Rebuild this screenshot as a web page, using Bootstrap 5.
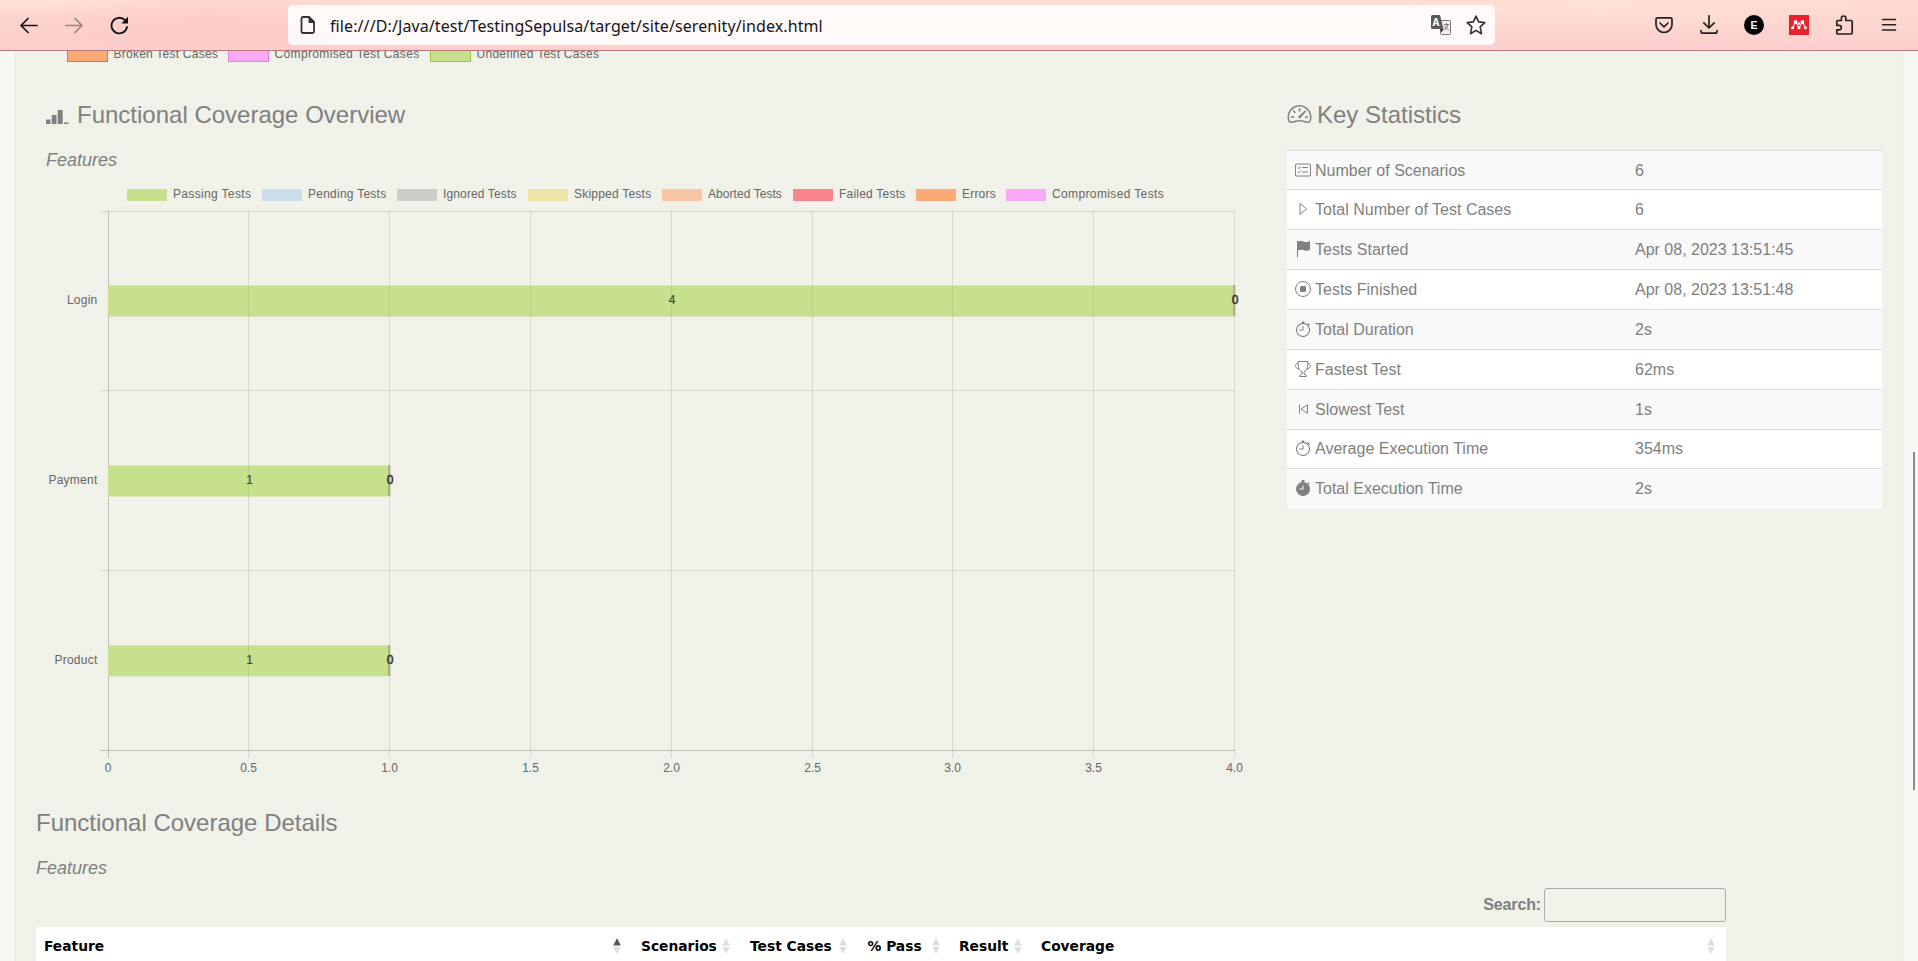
<!DOCTYPE html>
<html lang="en">
<head>
<meta charset="utf-8">
<title>Serenity Reports</title>
<link href="https://cdn.jsdelivr.net/npm/bootstrap@5.3.0/dist/css/bootstrap.min.css" rel="stylesheet">
<style>
html,body{height:961px;overflow:hidden}
body{font-family:"Liberation Sans",Arial,sans-serif;font-size:16px;color:#808080;background:#f7f8f3;width:1918px;line-height:1.42857}
.toolbar{height:51px;border-bottom:1px solid #b87a7a;padding-left:19px;background:radial-gradient(ellipse 260px 34px at 210px 28px,#fdcbc8 0,rgba(253,203,200,0) 100%),radial-gradient(ellipse 300px 26px at 1600px 8px,#ffe0d4 0,rgba(255,224,212,0) 100%),radial-gradient(ellipse 160px 22px at 60px 0,#ffe2d6 0,rgba(255,226,214,0) 100%),linear-gradient(180deg,#fedcd2 0,#fdd5cf 45%,#fccfce 100%)}
.toolbar svg{display:block;flex:none}
.gap-tools{gap:25px;margin-left:159px}
.url{margin-left:158px;width:1207px;height:40px;border-radius:5px;background:rgba(255,255,255,.86);color:#15141a;font-family:"Noto Sans",sans-serif;font-size:16px;padding:0 9px 0 12px}
.url .addr{margin:2px 0 0 14px;white-space:nowrap;letter-spacing:.1px}
.page-body{height:910px;margin-left:15px;width:1888px;border:solid #e5e6de;border-width:0 1px;background:#f0f1e8;position:relative;overflow:hidden}
.cut-legend{height:11px;padding-left:51px;font-size:12px;color:#666;line-height:12px}
.cut-legend .sw{width:41px;height:11px;border:1px solid;border-top:0;margin-right:5.500px}
.cut-legend .tx span{display:block;margin-top:-3px;white-space:nowrap}
h3{font-size:24px;font-weight:400;line-height:26px;margin:0;color:#808080;white-space:nowrap}
h4{font-size:18px;font-weight:400;font-style:italic;line-height:20px;margin:0;color:#808080}
.chart-legend{font-size:12px;color:#666;line-height:12px;height:12px;padding-left:111px}
.chart-legend .sw{width:40px;height:12px;margin-right:6px}
.chart-legend .tx{white-space:nowrap;margin-right:10px;margin-top:-1px}
.left-col{width:1271px}
.stats{width:595px;margin:0}
.stats td{height:40px;padding:0 8px;border-top:1px solid #ddd;border-bottom:0;color:#808080!important;vertical-align:middle;background:#fff;line-height:22px}
.stats tr:nth-child(odd) td{background:#f9f9f9}
.stats tr.sh td{height:39px}
.stats tr:first-child td{padding-top:1px}
.stats svg{width:16px;height:16px;fill:currentColor;margin-right:4px;vertical-align:-2px}
.search-row{width:1690px;margin-left:20px}
.search-row b{letter-spacing:-.15px;padding-top:1px}
.search-row input{width:182px;height:34px;border:1px solid #aaa;border-radius:3px;background:transparent;margin-left:3px}
.cov{width:1690px;margin-left:20px;height:40px;background:#fff;color:#000;font:bold 13.8px/38px "DejaVu Sans",sans-serif;white-space:nowrap}
.cov>div{display:flex;justify-content:space-between;align-items:center;height:38px}
.thumb{position:absolute;left:1913px;top:452px;width:2px;height:338px;background:#8a8a90}
</style>
</head>
<body>
<svg width="0" height="0" class="position-absolute"><defs>
<symbol id="watch" viewBox="0 0 16 16"><path d="M8.5 5.6a.5.5 0 1 0-1 0v2.9h-3a.5.5 0 0 0 0 1H8a.5.5 0 0 0 .5-.5V5.6z"/><path d="M6.5 1A.5.5 0 0 1 7 .5h2a.5.5 0 0 1 0 1v.57c1.36.196 2.594.78 3.584 1.64a.715.715 0 0 1 .012-.013l.354-.354-.354-.353a.5.5 0 0 1 .707-.708l1.414 1.415a.5.5 0 1 1-.707.707l-.353-.354-.354.354a.512.512 0 0 1-.013.012A7 7 0 1 1 7 2.071V1.5a.5.5 0 0 1-.5-.5zM8 3a6 6 0 1 0 .001 12A6 6 0 0 0 8 3z"/></symbol>
</defs></svg>
<nav class="toolbar d-flex align-items-center">
<svg width="20" height="20" viewBox="0 0 20 20" fill="none" stroke="#111" stroke-width="1.7" stroke-linecap="round" stroke-linejoin="round"><path d="M18 10.500H2M9 3.500L2 10.500l7 7"/></svg>
<svg width="20" height="20" viewBox="0 0 20 20" style="margin-left:26px" fill="none" stroke="#9b8382" stroke-width="1.7" stroke-linecap="round" stroke-linejoin="round"><path d="M1 10.500h16M10 3.500l7 7-7 7"/></svg>
<svg width="20" height="20" viewBox="0 0 20 20" style="margin-left:25px" fill="none" stroke="#111" stroke-width="1.8" stroke-linecap="round"><path d="M17 12A7.800 7.800 0 1 1 14.800 5"/><path d="M18 1.800v6.600h-6.600z" fill="#111" stroke="none"/></svg>
<div class="url d-flex align-items-center">
<svg width="16" height="18" viewBox="0 0 16 18" fill="none" stroke="#333" stroke-width="1.800" stroke-linejoin="round"><path d="M3 1h6L14 6v9.500q0 1.500-1.500 1.500H3Q1.500 17 1.500 15.500v-13Q1.500 1 3 1z"/><path d="M9 1v5.500H14z" fill="#333" stroke-width="1"/></svg>
<span class="addr">file:///D:/Java/test/TestingSepulsa/target/site/serenity/index.html</span>
<svg class="ms-auto" width="20" height="20" viewBox="0 0 20 20"><rect x="9.500" y="5.500" width="10" height="14" rx="1" fill="#f5f0ee" stroke="#777"/><path d="M1.500 0H9l3.500 14H1.500Q0 14 0 12.500v-11Q0 0 1.500 0z" fill="#5c5a5a"/><path d="M9 14h3.500L10.500 17.500z" fill="#333"/><text x="1.400" y="11.300" font-size="10" font-weight="bold" fill="#fff">A</text><path d="M13 9.500h5M15.500 8v1.500m1.500 0q-1 4-4 5.500M13.800 11q1.500 3 4 4" fill="none" stroke="#777"/></svg>
<svg style="margin-left:15px" width="20" height="20" viewBox="0 0 20 20" fill="none" stroke="#333" stroke-width="1.600" stroke-linejoin="round"><path d="M10 1.200l2.600 5.700 6.200.7-4.600 4.200 1.300 6.900-5.500-3.300-5.500 3.300 1.300-6.900L1.200 7.600l6.200-.7z"/></svg>
</div>
<div class="d-flex align-items-center gap-tools">
<svg width="20" height="20" viewBox="0 0 20 20" fill="none" stroke="#222" stroke-width="1.700" stroke-linecap="round" stroke-linejoin="round"><path d="M3.500 2.800h13q1.500 0 1.500 1.500v5.200a8 8 0 0 1-16 0V4.300q0-1.500 1.500-1.500z"/><path d="M6 8l4 3.800L14 8"/></svg>
<svg width="20" height="20" viewBox="0 0 20 20" fill="none" stroke="#222" stroke-width="1.700" stroke-linecap="round" stroke-linejoin="round"><path d="M10 .8v12M4.800 7.800l5.200 5.200 5.200-5.200M2 15.500v1q0 1.700 1.700 1.700h12.600q1.700 0 1.700-1.700v-1"/></svg>
<svg width="20" height="20" viewBox="0 0 20 20"><circle cx="10" cy="10" r="10"/><text x="10" y="13.800" font-size="10.500" font-weight="bold" text-anchor="middle" fill="#fff">E</text></svg>
<svg width="20" height="20" viewBox="0 0 20 20"><path fill="#e9202e" d="M0 0h20v20H0z"/><g fill="#fff"><circle cx="6.600" cy="7" r="1.900"/><circle cx="13.400" cy="7" r="1.900"/><circle cx="10" cy="8.600" r="1.300"/><circle cx="3.600" cy="12.800" r="1.500"/><circle cx="16.400" cy="12.800" r="1.500"/><circle cx="10" cy="12.800" r="1.500"/></g><path d="M3.600 12.500Q5 11 5.600 8M16.400 12.500Q15 11 14.400 8M7 7.500l2.600 4.800M13 7.500l-2.600 4.800" stroke="#fff" stroke-width="1" fill="none"/></svg>
<svg width="20" height="20" viewBox="0 0 20 20" fill="none" stroke="#222" stroke-width="1.700" stroke-linejoin="round"><path d="M2.800 8V6.500q0-1 1-1h3.600V3.200a2.200 2.200 0 0 1 4.400 0v2.300H17q1.200 0 1.200 1.200v11.100q0 1.200-1.200 1.200H4q-1.200 0-1.200-1.200v-3h2.300a2.200 2.200 0 0 0 0-4.500H2.800z"/></svg>
<svg width="20" height="20" viewBox="0 0 20 20" stroke="#222" stroke-width="1.600" stroke-linecap="round"><path d="M3.500 4.500h13M3.500 9.800h13M3.500 15h13"/></svg>
</div>
</nav>
<main class="page-body">
<div class="cut-legend d-flex">
<div class="sw" style="border-color:#ff690f;background:#fba977"></div><div class="tx" style="width:114.500px"><span style="letter-spacing:.24px">Broken Test Cases</span></div>
<div class="sw" style="border-color:#ee78f2;background:#f9a9f5"></div><div class="tx" style="width:155.500px"><span style="letter-spacing:.36px">Compromised Test Cases</span></div>
<div class="sw" style="border-color:#99cc33;background:#c6e08d"></div><div class="tx"><span style="letter-spacing:.28px">Undefined Test Cases</span></div>
</div>
<div class="d-flex">
<section class="left-col">
<h3 class="d-flex" style="margin:40px 0 0 30px"><svg width="23" height="16" viewBox="0 0 23 16" fill="#808080" style="margin:8px 8px 0 0"><path d="M0 9.500h4.500V14H0zM5.800 5h4.700v9H5.800zM11.700 0h5v14h-5zM18 12.500h4.500V14H18z"/></svg>Functional Coverage Overview</h3>
<h4 style="margin:22px 0 0 30px">Features</h4>
<div class="chart-legend d-flex" id="legend" style="margin-top:19px"></div>
<svg id="chart" class="d-block" width="1250" height="590" style="margin-left:-16px" font-size="12" fill="#666"></svg>
</section>
<section>
<h3 class="d-flex" style="margin:40px 0 22px"><svg width="25" height="24" viewBox="0 0 16 16" fill="#808080" style="margin:0 5px 0 0"><path d="M8 4a.5.5 0 0 1 .5.5V6a.5.5 0 0 1-1 0V4.500A.5.5 0 0 1 8 4zM3.732 5.732a.5.5 0 0 1 .707 0l.915.914a.5.5 0 1 1-.708.708l-.914-.915a.5.5 0 0 1 0-.707zM2 10a.5.5 0 0 1 .5-.5h1.586a.5.5 0 0 1 0 1H2.500A.5.5 0 0 1 2 10zm9.500 0a.5.5 0 0 1 .5-.5h1.500a.5.5 0 0 1 0 1H12a.5.5 0 0 1-.5-.5zm.754-4.246a.389.389 0 0 0-.527-.02L7.547 9.310a.910.910 0 1 0 1.302 1.258l3.434-4.297a.389.389 0 0 0-.029-.518z"/><path fill-rule="evenodd" d="M0 10a8 8 0 1 1 15.547 2.661c-.442 1.253-1.845 1.602-2.932 1.250C11.309 13.488 9.475 13 8 13c-1.474 0-3.310.488-4.615.911-1.087.352-2.490.003-2.932-1.250A7.988 7.988 0 0 1 0 10zm8-7a7 7 0 0 0-6.603 9.329c.203.575.923.876 1.680.630C4.397 12.533 6.358 12 8 12s3.604.532 4.923.960c.757.245 1.477-.056 1.680-.631A7 7 0 0 0 8 3z"/></svg>Key Statistics</h3>
<table class="table stats"><colgroup><col style="width:340px"><col></colgroup><tbody>
<tr class="sh"><td><svg viewBox="0 0 16 16"><rect x=".5" y="2" width="15" height="12" rx="1" fill="none" stroke="currentColor"/><path d="M7 5h6v1H7zM7 9.500h6v1H7zM3 5.200l.9.9 1.600-1.800.5.500L4 7 2.500 5.700zM3 9.500l.9.900 1.600-1.800.5.500L4 11.300 2.500 10z"/></svg>Number of Scenarios</td><td>6</td></tr>
<tr><td><svg viewBox="0 0 16 16"><path d="M5 2.500v11l6.500-5.500z" fill="none" stroke="currentColor" stroke-linejoin="round"/></svg>Total Number of Test Cases</td><td>6</td></tr>
<tr><td><svg viewBox="0 0 16 16"><path d="M14.778.085A.5.5 0 0 1 15 .5V8.500a.5.5 0 0 1-.314.464c-1 .400-2 .800-3.186.8-1 0-1.900-.3-2.700-.6S7.100 8.700 6.200 8.700 4 9 3 9.500V16H2V0h1v.3C4 .1 5.200 0 6 0c1 0 2 .3 2.900.6.8.3 1.600.6 2.600.6 1 0 2.200-.4 3.278-1.115z"/></svg>Tests Started</td><td>Apr 08, 2023 13:51:45</td></tr>
<tr><td><svg viewBox="0 0 16 16"><circle cx="8" cy="8" r="7.500" fill="none" stroke="currentColor"/><rect x="5" y="5" width="6" height="6" rx="1.300"/></svg>Tests Finished</td><td>Apr 08, 2023 13:51:48</td></tr>
<tr><td><svg><use href="#watch"/></svg>Total Duration</td><td>2s</td></tr>
<tr><td><svg viewBox="0 0 16 16"><path fill="none" stroke="currentColor" d="M3 .5h10c0 5-.8 9-4 10.300V13l2 1.200.5 1.300h-7L5 14.200 7 13v-2.200C3.800 9.500 3 5.500 3 .5zM3.100 2.500C-.6 2.300-.6 7 4.200 8.200M12.900 2.500c3.700-.2 3.700 4.500-1.100 5.700"/></svg>Fastest Test</td><td>62ms</td></tr>
<tr><td><svg viewBox="0 0 16 16"><path fill="none" stroke="currentColor" stroke-linejoin="round" d="M4.500 3.500v9M12.500 3.800v8.400L6 8z"/></svg>Slowest Test</td><td>1s</td></tr>
<tr class="sh"><td><svg><use href="#watch"/></svg>Average Execution Time</td><td>354ms</td></tr>
<tr><td><svg viewBox="0 0 16 16"><path fill-rule="evenodd" d="M6.500 0h3v1.500H9V2.100A7 7 0 0 1 12.600 3.700l.3-.4-.3-.3.7-.8 1.500 1.500-.8.700-.3-.3-.4.300A7 7 0 1 1 7 2.100V1.500h-.5zM7.500 5.500V8.500H4.500v1h4v-4z"/></svg>Total Execution Time</td><td>2s</td></tr>
</tbody></table>
</section>
</div>
<h3 style="margin:19px 0 0 20px" id="details">Functional Coverage Details</h3>
<h4 style="margin:22px 0 0 20px">Features</h4>
<div class="search-row d-flex justify-content-end align-items-center" style="margin-top:10px"><b>Search:</b><input type="text" aria-label="Search"></div>
<div class="cov d-flex" style="margin-top:5px" id="cov"></div>
</main>
<div class="thumb"></div>
<script>
// legend entry: label, label width, colour, letter spacing
const items=[['Passing Tests',79,'#c6e08d',.34],['Pending Tests',79,'#cbddea',.25],['Ignored Tests',75,'#cccdc8',.13],['Skipped Tests',78,'#eee4a9',.22],['Aborted Tests',75,'#f8c5a7',.06],['Failed Tests',67,'#f8858c',.22],['Errors',34,'#fba977',.2],['Compromised Tests',112,'#f9a9f5',.37]];
document.getElementById('legend').innerHTML=items.map(i=>`<div class="sw" style="background:${i[2]}"></div><div class="tx" style="width:${i[1]}px;letter-spacing:${i[3]}px">${i[0]}</div>`).join('');
// grid line positions; oy is the top of the drawing area
const X=[108,248,389,530,671,812,952,1093,1234],Y=[211,390,570,750],oy=201;
let s='';
X.forEach((x,i)=>{s+=`<rect x="${x}" y="${211-oy}" width="1" height="547" fill="#000" fill-opacity="${i?.1:.2}"/><text x="${x+(i?.5:0)}" y="${772-oy}" text-anchor="middle">${i?(i/2).toFixed(1):'0'}</text>`});
Y.forEach((y,i)=>{s+=`<rect x="100" y="${y-oy}" width="1135" height="1" fill="#000" fill-opacity="${i==3?.2:.1}"/>`});
[['Login',285.5,1234],['Payment',465.5,390],['Product',645.3,390]].forEach(([n,y,x])=>{
 s+=`<rect x="108" y="${y-oy}" width="${x-108}" height="31" fill="#c6e08d"/>`;
 X.forEach((g,i)=>{if(i&&g<x-2)s+=`<rect x="${g}" y="${y-oy}" width="1" height="31" fill="#000" fill-opacity=".07"/>`});
});
[['Login',300,1234,4],['Payment',480,389,1],['Product',660,389,1]].forEach(([n,y,x,v])=>{
 s+=`<rect x="${x-1}" y="${y-15-oy}" width="2.5" height="31" fill="#808060" fill-opacity=".45"/>
 <text x="97.500" y="${y+4-oy}" text-anchor="end" letter-spacing=".25">${n}</text><text x="${(108+x)/2+1}" y="${y+4-oy}" text-anchor="middle" fill="#444" stroke="#444" stroke-width=".2">${v}</text><text x="${x+1}" y="${y+4-oy}" text-anchor="middle" fill="#333" stroke="#333" stroke-width=".5">0</text>`;
});
document.getElementById('chart').innerHTML=s;
// each column: title, left padding, column width
const cols=[['Feature',8,585],['Scenarios',20,109],['Test Cases',20,117],['% Pass',20.5,93],['Result',19,82],['Coverage',19,693]];
document.getElementById('cov').innerHTML=cols.map((c,i)=>`<div style="width:${c[2]}px;padding-left:${c[1]}px">${c[0]}<svg width="8" height="16" fill="#ddd"><path d="M4 .3l3.800 7.200H.2z" fill="${i?'#ddd':'#555'}"/><path d="M4 15.800L.2 9h7.600z"/></svg></div>`).join('');
</script>
<script src="https://cdn.jsdelivr.net/npm/bootstrap@5.3.0/dist/js/bootstrap.bundle.min.js"></script>
</body>
</html>
